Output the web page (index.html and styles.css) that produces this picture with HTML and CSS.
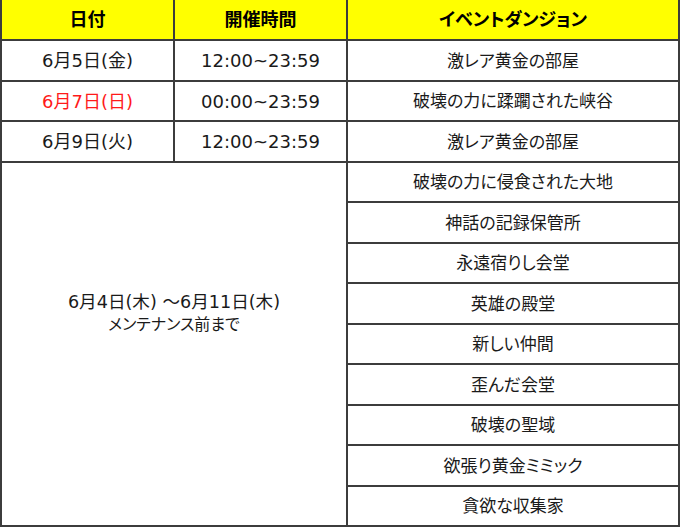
FILE: index.html
```html
<!DOCTYPE html>
<html lang="ja">
<head>
<meta charset="utf-8">
<link rel="stylesheet" href="styles.css">
</head>
<body>
<div class="sched">
  <div class="cell head">日付</div>
  <div class="cell head">開催時間</div>
  <div class="cell head">イベントダンジョン</div>

  <div class="cell">6月5日(金)</div>
  <div class="cell">12:00~23:59</div>
  <div class="cell dun">激レア黄金の部屋</div>

  <div class="cell sun">6月7日(日)</div>
  <div class="cell">00:00~23:59</div>
  <div class="cell dun">破壊の力に蹂躙された峡谷</div>

  <div class="cell">6月9日(火)</div>
  <div class="cell">12:00~23:59</div>
  <div class="cell dun">激レア黄金の部屋</div>

  <div class="cell merged">
    <div class="range">6月4日(木) ～6月11日(木)</div>
    <div class="note">メンテナンス前まで</div>
  </div>
  <div class="cell dun">破壊の力に侵食された大地</div>
  <div class="cell dun">神話の記録保管所</div>
  <div class="cell dun">永遠宿りし会堂</div>
  <div class="cell dun">英雄の殿堂</div>
  <div class="cell dun">新しい仲間</div>
  <div class="cell dun">歪んだ会堂</div>
  <div class="cell dun">破壊の聖域</div>
  <div class="cell dun">欲張り黄金ミミック</div>
  <div class="cell dun">貪欲な収集家</div>
</div>
</body>
</html>
```
FILE: styles.css
```css
html, body {
  margin: 0;
  padding: 0;
  background: #ffffff;
}
.sched {
  display: grid;
  grid-template-columns: 171px 171px 330px;
  grid-template-rows: 39px repeat(12, 38.5px);
  gap: 2px;
  padding: 0 2px 2px 2px;
  width: 676px;
  background: #3c3c3c;
  font-family: "DejaVu Sans", "Noto Sans CJK JP", sans-serif;
  font-size: 18px;
  font-feature-settings: "palt" 1;
  color: #1a1a1a;
}
.cell {
  background: #ffffff;
  display: flex;
  align-items: center;
  justify-content: center;
  line-height: 1;
  padding-top: 2px;
  box-sizing: border-box;
}
.dun {
  font-size: 17px;
}
.head {
  background: #ffff00;
  font-weight: bold;
  color: #000;
  padding-top: 1px;
}
.sun {
  color: #ff1a1a;
}
.merged {
  grid-column: 1 / span 2;
  grid-row: 5 / span 9;
  flex-direction: column;
  padding-bottom: 62px;
}
.range {
  font-size: 17.6px;
  line-height: 23px;
}
.note {
  font-size: 16px;
  line-height: 22px;
}
```
